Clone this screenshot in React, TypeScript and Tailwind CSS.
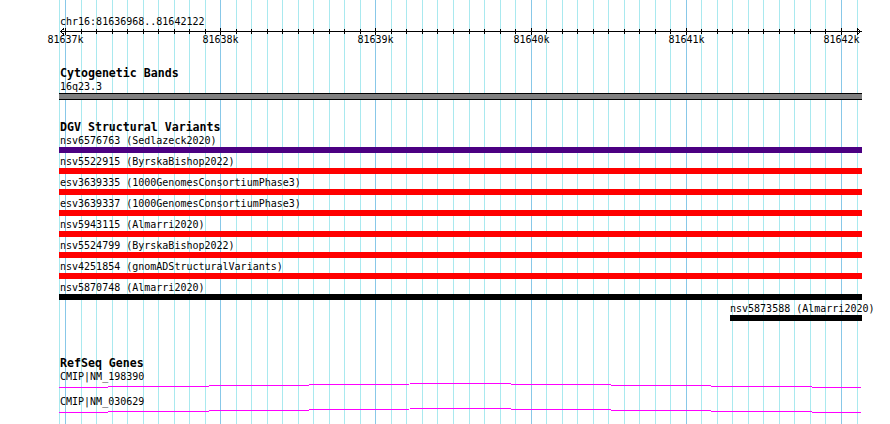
import type { ReactNode } from 'react'

const MONO = "font-['DejaVu_Sans_Mono','Liberation_Mono',monospace]"

const TICKS = Array.from({ length: 52 }, (_, k) => ({ x: Math.round(65 + 15.52 * k), major: k % 10 === 0, k }))

const VARIANTS = [
  { label: 'nsv6576763 (Sedlazeck2020)', color: 'bg-[#4b0082]' },
  { label: 'nsv5522915 (ByrskaBishop2022)', color: 'bg-[#ff0000]' },
  { label: 'esv3639335 (1000GenomesConsortiumPhase3)', color: 'bg-[#ff0000]' },
  { label: 'esv3639337 (1000GenomesConsortiumPhase3)', color: 'bg-[#ff0000]' },
  { label: 'nsv5943115 (Almarri2020)', color: 'bg-[#ff0000]' },
  { label: 'nsv5524799 (ByrskaBishop2022)', color: 'bg-[#ff0000]' },
  { label: 'nsv4251854 (gnomADStructuralVariants)', color: 'bg-[#ff0000]' },
  { label: 'nsv5870748 (Almarri2020)', color: 'bg-black' },
]

const GENES = ['CMIP|NM_198390', 'CMIP|NM_030629']

export default function App() {
  return (
    <div className={`relative w-[890px] h-[424px] overflow-hidden bg-white text-black ${MONO}`}>
      <GridLines />

      <div className="relative flex flex-col">
        <Label className="mt-[15px] ml-[60px]">chr16:81636968..81642122</Label>
        <Ruler />

        {/* cytogenetic bands */}
        <Title className="mt-[19px]">Cytogenetic Bands</Title>
        <Label className="ml-[60px]">16q23.3</Label>
        <div className="ml-[59px] w-[803px] h-[7px] border-y border-black bg-[#808080]" />

        {/* DGV */}
        <Title className="mt-[21px]">DGV Structural Variants</Title>
        {VARIANTS.map(v => (
          <div key={v.label} className="ml-[59px] w-[803px] pb-[2px]">
            <Label className="pl-[1px]">{v.label}</Label>
            <div className={`h-[6px] w-full ${v.color}`} />
          </div>
        ))}
        <div className="ml-[730px] w-[132px]">
          <Label>nsv5873588 (Almarri2020)</Label>
          <div className="h-[6px] w-full bg-black" />
        </div>

        {/* refseq */}
        <Title className="mt-[36px]">RefSeq Genes</Title>
        {GENES.map(g => (
          <div key={g} className="ml-[59px] w-[803px]">
            <Label className="pl-[1px]">{g}</Label>
            <svg width="803" height="12" className="block" shapeRendering="crispEdges">
              <polyline points="0,4.5 401,0.5 802,4.5" fill="none" stroke="#ff00ff" strokeWidth="1" />
            </svg>
          </div>
        ))}
      </div>
    </div>
  )
}

function Label({ children, className = '' }: { children: ReactNode; className?: string }) {
  return <div className={`h-[13px] text-[10px] leading-[13px] whitespace-pre ${className}`}>{children}</div>
}

function Title({ children, className = '' }: { children: ReactNode; className?: string }) {
  return (
    <div className={`ml-[60px] h-[13px] text-[11.6px] leading-[13px] font-bold whitespace-pre ${className}`}>{children}</div>
  )
}

function GridLines() {
  return (
    <svg className="absolute inset-0" width="890" height="424" shapeRendering="crispEdges">
      <line x1="59.5" y1="0" x2="59.5" y2="424" stroke="#a9e9ef" />
      {TICKS.map(t => (
        <line key={t.k} x1={t.x + 0.5} y1="0" x2={t.x + 0.5} y2="424" stroke={t.major ? '#88c8e8' : '#a9e9ef'} />
      ))}
    </svg>
  )
}

function Ruler() {
  return (
    <svg width="890" height="20" className="block" shapeRendering="crispEdges">
      <line x1="60" y1="3.5" x2="862" y2="3.5" stroke="#000" />
      <polyline points="64,0.5 60.5,3.5 64,6.5" fill="none" stroke="#000" />
      <polyline points="857,0.5 860.5,3.5 857,6.5" fill="none" stroke="#000" />
      {TICKS.map(t => (
        <line key={t.k} x1={t.x + 0.5} y1={t.major ? 0 : 1} x2={t.x + 0.5} y2={t.major ? 7 : 6} stroke="#000" />
      ))}
      {TICKS.filter(t => t.major).map(t => (
        <text
          key={t.k}
          x={t.x + 0.5}
          y="15"
          textAnchor="middle"
          fontSize="10"
          fontFamily="'DejaVu Sans Mono','Liberation Mono',monospace"
          fill="#000"
        >
          {`${81637 + t.k / 10}k`}
        </text>
      ))}
    </svg>
  )
}
